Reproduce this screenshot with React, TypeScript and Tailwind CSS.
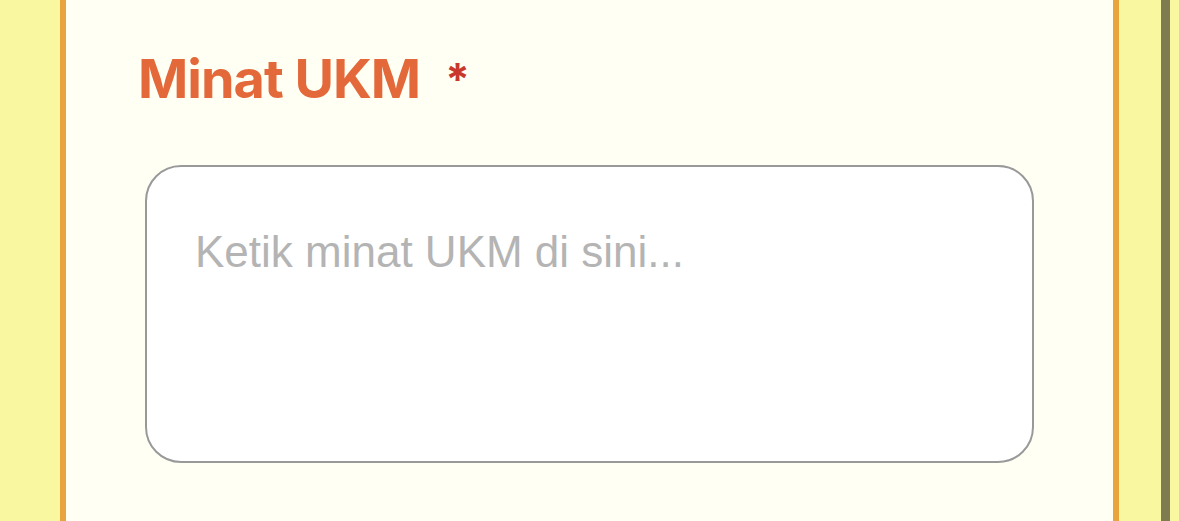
import React, { useState } from "react";

const App = () => {
  const [minat, setMinat] = useState("");

  return (
    <div className="flex h-[521px] w-full overflow-hidden bg-[#f9f8a0]">
      <div className="w-[60px] shrink-0" />

      {/* Form card */}
      <div className="w-[1059px] shrink-0 border-x-[6px] border-[#eaa43e] bg-[#fffff3] px-[79px] pt-[52px]">
        <label
          htmlFor="minat"
          className="-ml-[7px] flex items-start text-[54px] font-bold leading-none tracking-[-1px] text-[#e4693a] [font-family:Inter,'Liberation_Sans',sans-serif]"
        >
          <span>Minat UKM</span>
          <span className="ml-[25px] mt-[5px] text-[44px] text-[#c8382d]">*</span>
        </label>

        <textarea
          id="minat"
          value={minat}
          onChange={(e) => setMinat(e.target.value)}
          placeholder="Ketik minat UKM di sini..."
          className="mt-[59px] block h-[298px] w-full resize-none rounded-[36px] border-2 border-[#999999] bg-white px-[48px] pt-[59px] text-[44px] leading-[1.2] text-[#333] outline-none placeholder:text-[#b4b4b4] [font-family:'Liberation_Sans',Arial,sans-serif]"
        />
      </div>

      <div className="w-[42px] shrink-0" />
      <div className="w-[9px] shrink-0 bg-[#7d7b4f]" />
      <div className="flex-1" />
    </div>
  );
};

export default App;
